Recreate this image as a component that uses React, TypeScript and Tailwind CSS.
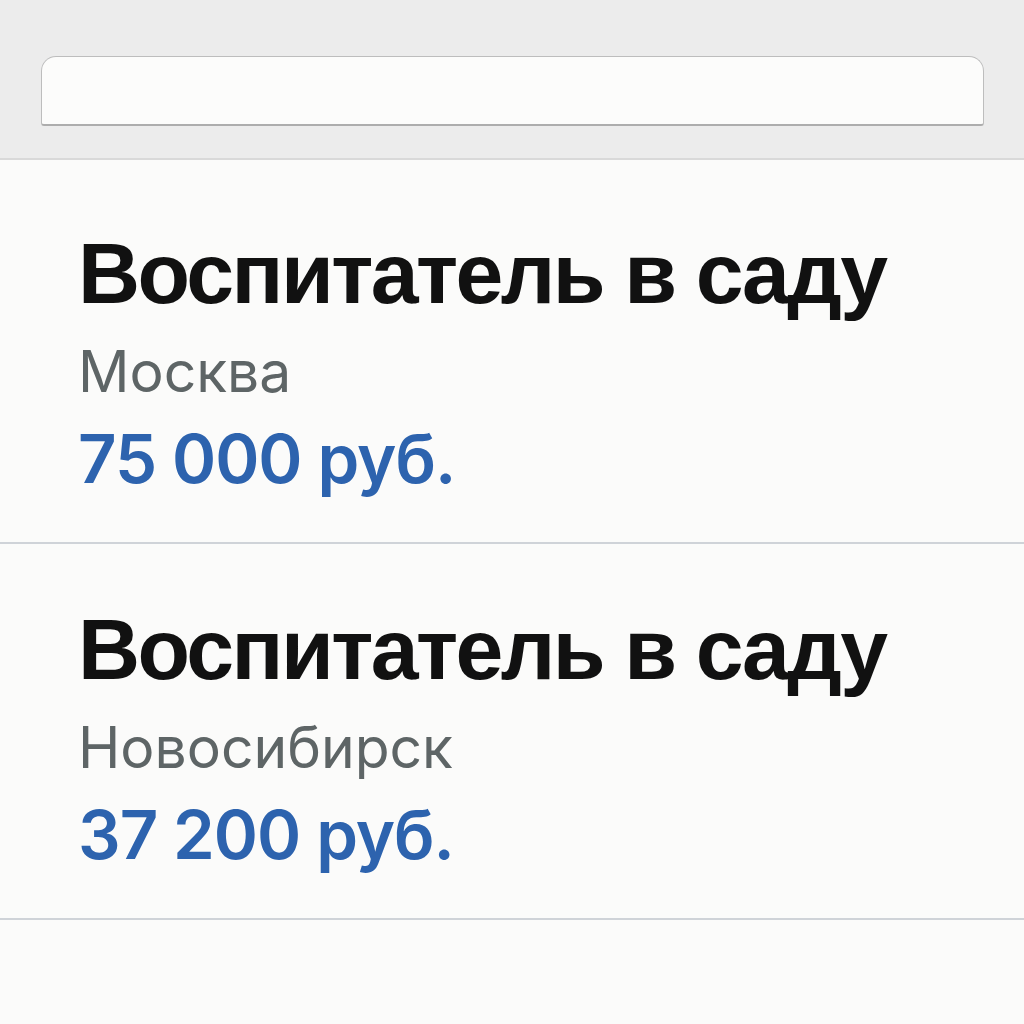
const vacancies = [
  { title: "Воспитатель в саду", city: "Москва", salary: "75 000 руб." },
  { title: "Воспитатель в саду", city: "Новосибирск", salary: "37 200 руб." },
];

function VacancyItem({ title, city, salary }: { title: string; city: string; salary: string }) {
  return (
    <div className="border-b-2 border-[#cfd3d8] pl-[78px] pr-6 pt-[62px] pb-[50px]">
      <h2 className="text-[86px] leading-none font-bold text-[#111111] tracking-[-2.6px]">{title}</h2>
      <p className="mt-[27px] font-['Inter',sans-serif] text-[57px] leading-none text-[#5e6566]">{city}</p>
      <p className="mt-[25px] font-['Inter',sans-serif] text-[67px] leading-none font-semibold text-[#2d63ae] tracking-[-1px]">
        {salary}
      </p>
    </div>
  );
}

export default function App() {
  return (
    <div className="min-h-screen bg-[#fbfbfa] font-['Liberation_Sans',Arial,sans-serif]">
      <div className="h-[160px] bg-[#ececec] border-b-2 border-[#d9d9d9] px-[41px] pt-[56px]">
        <div className="h-[70px] w-[943px] rounded-t-[15px] rounded-b-[3px] bg-[#fcfcfb] border border-[#bdbdbd] border-b-2 border-b-[#adadad]" />
      </div>
      <div className="pt-[8px]">
        {vacancies.map((v, i) => (
          <VacancyItem key={i} {...v} />
        ))}
      </div>
    </div>
  );
}
